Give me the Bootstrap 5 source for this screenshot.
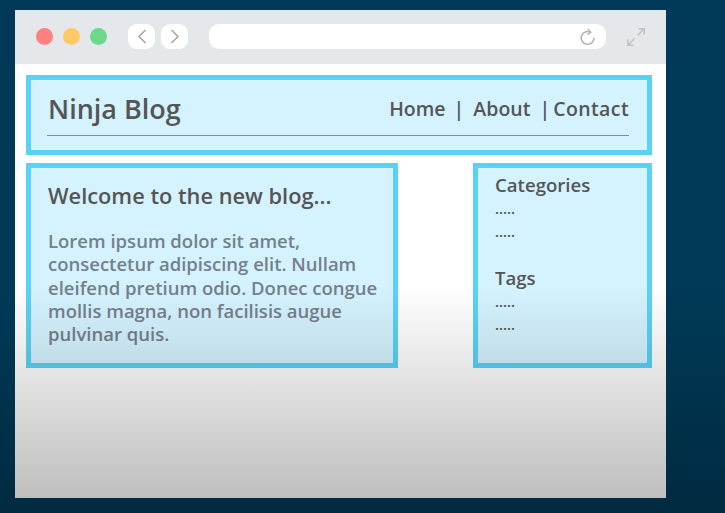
<!DOCTYPE html>
<html lang="en">
<head>
  <meta charset="UTF-8">
  <meta name="viewport" content="width=device-width, initial-scale=1.0">
  <title>Ninja Blog</title>
  <link href="https://cdn.jsdelivr.net/npm/bootstrap@5.3.0/dist/css/bootstrap.min.css" rel="stylesheet">
  <style>
    html, body { height: 100%; }
    body {
      background: #003a58;
      font-family: "Open Sans", "Liberation Sans", sans-serif;
      padding: 10px 59px 15px 15px;
      overflow: hidden;
    }
    .shade {
      position: absolute;
      left: 0; right: 0; top: 285px; bottom: 0;
      background: linear-gradient(to bottom, rgba(0,0,0,0), rgba(0,0,0,.27));
      pointer-events: none;
    }
    .browser { height: 488px; background: #fff; border-radius: 3px 3px 0 0; }
    .browser-bar { height: 54px; background: #e4e8ea; padding: 14px 20px 15px 21px; }
    .dots { gap: 10px; margin-right: 21px; }
    .dot { width: 17px; height: 17px; border-radius: 50%; }
    .dot-red { background: #ff8080; }
    .dot-yellow { background: #ffc966; }
    .dot-green { background: #6cd88b; }
    .nav-keys { gap: 6px; }
    .nav-key { width: 27px; height: 25px; background: #fff; border-radius: 9px; }
    .address { width: 397px; height: 25px; background: #fff; border-radius: 10px; margin: 0 20px 0 21px; padding-right: 10px; }
    .page { padding: 11px 14px 0 11px; }
    .frame { background: #d4f3ff; border: 5px solid #5ad2f8; color: #555; }
    .site-head { height: 80px; padding: 0 18px 0 16px; margin-bottom: 8px; }
    .head-line { height: 56px; border-bottom: 1px solid #868e92; padding-top: 3px; }
    .site-title { font-size: 27px; font-weight: 600; color: #555; margin: 0 0 0 1px; }
    .site-links { font-size: 19.5px; font-weight: 600; color: #555; }
    .pipe-a { margin: 0 9px 0 8px; }
    .pipe-b { margin: 0 3px 0 9px; }
    .link-wide { letter-spacing: .4px; }
    .post { width: 372px; height: 205px; padding: 14px 0 14px 17px; }
    .post h2 { font-size: 21.8px; font-weight: 600; color: #555; margin: 0 0 19px; line-height: 28px; }
    .post p { font-size: 18.5px; font-weight: 600; color: #75808a; line-height: 23.3px; margin: 0; white-space: nowrap; }
    .aside { width: 179px; height: 205px; padding: 5px 17px; }
    .aside h3 { font-size: 18.6px; font-weight: 600; color: #555; margin: 0; line-height: 24px; }
    .aside p { font-size: 14.500px; font-weight: 600; color: #555; line-height: 23.3px; margin: 0; height: 23.3px; }
    .aside h3.aside-gap { margin-top: 22px; }
  </style>
</head>
<body class="position-relative">
  <div class="browser d-flex flex-column">
    <div class="browser-bar d-flex align-items-center">
      <div class="dots d-flex">
        <span class="dot dot-red d-block"></span>
        <span class="dot dot-yellow d-block"></span>
        <span class="dot dot-green d-block"></span>
      </div>
      <div class="nav-keys d-flex">
        <span class="nav-key d-flex align-items-center justify-content-center">
          <svg width="10" height="15" viewBox="0 0 10 15" fill="none" stroke="#a8a8a8" stroke-width="1.6"><path d="M8.500 1 2 7.500 8.500 14"/></svg>
        </span>
        <span class="nav-key d-flex align-items-center justify-content-center">
          <svg width="10" height="15" viewBox="0 0 10 15" fill="none" stroke="#a8a8a8" stroke-width="1.6"><path d="M1.500 1 8 7.500 1.500 14"/></svg>
        </span>
      </div>
      <div class="address d-flex align-items-center justify-content-end">
        <svg width="17" height="18" viewBox="0 0 17 18" fill="none" stroke="#b4b4b4" stroke-width="1.6"><path d="M11.500 4.200A6.400 6.400 0 1 0 15 10"/><path d="M8.800 1 11.800 4.300 8.500 6.600" stroke-width="1.4"/></svg>
      </div>
      <svg width="20" height="20" viewBox="0 0 20 20" fill="none" stroke="#bcc2c5" stroke-width="1.500"><path d="M11.500 8.500 18 2M12.500 1.800h5.700v5.700M8.500 11.500 2 18M7.500 18.200H1.800v-5.700"/></svg>
    </div>

    <div class="page">
      <header class="frame site-head">
        <div class="head-line d-flex justify-content-between align-items-center">
          <h1 class="site-title">Ninja Blog</h1>
          <div class="site-links d-flex">
            <span>Home</span><span class="pipe-a">|</span><span>About</span><span class="pipe-b">|</span><span class="link-wide">Contact</span>
          </div>
        </div>
      </header>
      <div class="d-flex justify-content-between">
        <article class="frame post">
          <h2>Welcome to the new blog...</h2>
          <p>Lorem ipsum dolor sit amet,<br>consectetur adipiscing elit. Nullam<br>eleifend pretium odio. Donec congue<br>mollis magna, non facilisis augue<br>pulvinar quis.</p>
        </article>
        <aside class="frame aside">
          <h3>Categories</h3>
          <p>.....</p>
          <p>.....</p>
          <h3 class="aside-gap">Tags</h3>
          <p>.....</p>
          <p>.....</p>
        </aside>
      </div>
    </div>
  </div>
  <div class="shade"></div>
  <script src="https://cdn.jsdelivr.net/npm/bootstrap@5.3.0/dist/js/bootstrap.bundle.min.js"></script>
</body>
</html>
